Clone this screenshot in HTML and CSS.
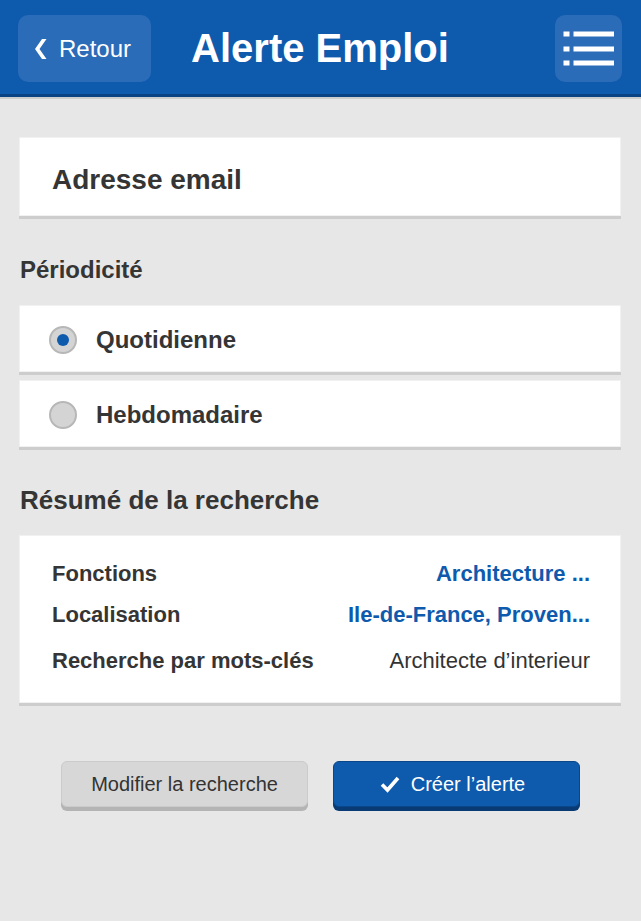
FILE: index.html
```html
<!DOCTYPE html>
<html lang="fr">
<head>
<meta charset="utf-8">
<title>Alerte Emploi</title>
<link rel="stylesheet" href="styles.css">
</head>
<body>
<header class="topbar">
  <div class="topbar-left">
    <button class="hbtn back-btn" type="button">
      <svg class="chev" width="13" height="20" viewBox="0 0 13 20"><polygon points="8,0 12.5,0 5.5,10 12.5,20 8,20 1,10" fill="#fff"/></svg>
      <span>Retour</span>
    </button>
  </div>
  <h1 class="title">Alerte Emploi</h1>
  <div class="topbar-right">
    <button class="hbtn menu-btn" type="button" aria-label="Menu">
      <svg width="67" height="67" viewBox="0 0 67 67">
        <rect x="8.5" y="16.5" width="6" height="5" fill="#fff"/>
        <rect x="18.5" y="16.5" width="40.5" height="5" fill="#fff"/>
        <rect x="8.5" y="31.5" width="6" height="5" fill="#fff"/>
        <rect x="18.5" y="31.5" width="40.5" height="5" fill="#fff"/>
        <rect x="8.5" y="45.5" width="6" height="5" fill="#fff"/>
        <rect x="18.5" y="45.5" width="40.5" height="5" fill="#fff"/>
      </svg>
    </button>
  </div>
</header>

<main class="content">
  <div class="card email-card">Adresse email</div>

  <h2 class="section-title periodicite">Périodicité</h2>
  <div class="card radio-card">
    <span class="radio checked"></span>
    <span class="radio-label">Quotidienne</span>
  </div>
  <div class="card radio-card">
    <span class="radio"></span>
    <span class="radio-label">Hebdomadaire</span>
  </div>

  <h2 class="section-title resume">Résumé de la recherche</h2>
  <div class="card summary-card">
    <div class="row">
      <span class="key">Fonctions</span>
      <span class="val link">Architecture ...</span>
    </div>
    <div class="row">
      <span class="key">Localisation</span>
      <span class="val link">Ile-de-France, Proven...</span>
    </div>
    <div class="row row-last">
      <span class="key">Recherche par mots-clés</span>
      <span class="val plain">Architecte d’interieur</span>
    </div>
  </div>

  <div class="actions">
    <button class="btn btn-grey" type="button">Modifier la recherche</button>
    <button class="btn btn-blue" type="button">
      <svg width="20" height="18" viewBox="0 0 20 18"><polyline points="2,9.5 7.5,15 18,3" fill="none" stroke="#fff" stroke-width="3.6" stroke-linejoin="miter" stroke-linecap="butt"/></svg>
      <span>Créer l’alerte</span>
    </button>
  </div>
</main>
</body>
</html>
```

FILE: styles.css
```css
* { box-sizing: border-box; }

html, body {
  margin: 0;
  padding: 0;
}

body {
  background: #e7e7e7;
  font-family: "Liberation Sans", Arial, sans-serif;
  color: #353535;
  min-height: 921px;
}

.topbar {
  display: grid;
  grid-template-columns: 1fr auto 1fr;
  align-items: center;
  height: 97px;
  padding: 15px 19px 12px 18px;
  background: #0e5aad;
  border-bottom: 3px solid #0a4384;
  box-shadow: 0 2px 0 #cdcdcd;
}

.topbar-left { display: flex; justify-content: flex-start; }
.topbar-right { display: flex; justify-content: flex-end; }

.hbtn {
  border: none;
  margin: 0;
  padding: 0;
  height: 67px;
  border-radius: 10px;
  background: #2a6cb8;
  color: #fff;
  font-family: "Liberation Sans", Arial, sans-serif;
  cursor: pointer;
}

.back-btn {
  width: 133px;
  display: flex;
  align-items: center;
  padding-left: 16px;
  gap: 12px;
  font-size: 24px;
}

.back-btn .chev { display: block; margin-top: 1px; }

.menu-btn {
  width: 67px;
  display: block;
}

.menu-btn svg { display: block; }

.title {
  margin: 0;
  color: #fff;
  font-size: 40px;
  font-weight: bold;
  line-height: 1;
  padding-bottom: 2px;
  white-space: nowrap;
}

.content {
  padding: 40px 20px 0 19px;
}

.card {
  background: #fff;
  border: 1px solid #f1f1f1;
  box-shadow: 0 3px 0 #cdcdcd;
}

.email-card {
  font-size: 28px;
  font-weight: bold;
  line-height: 32px;
  padding: 26px 32px 19px;
  height: 79px;
}

.section-title {
  margin: 0;
  font-size: 24px;
  font-weight: bold;
  line-height: 30px;
  padding-left: 1px;
}

.periodicite { margin-top: 39px; margin-bottom: 20px; font-size: 24px; }
.resume { margin-top: 38px; margin-bottom: 20px; font-size: 26px; }

.radio-card {
  display: flex;
  align-items: center;
  height: 67px;
  padding: 3px 0 0 29px;
  gap: 19px;
  margin-bottom: 8px;
}

.radio {
  width: 28px;
  height: 28px;
  border-radius: 50%;
  background: #d4d4d4;
  border: 2px solid #b7b7b7;
  display: flex;
  align-items: center;
  justify-content: center;
  flex: none;
}

.radio.checked::after {
  content: "";
  width: 12px;
  height: 12px;
  border-radius: 50%;
  background: #0e5aad;
}

.radio-label {
  font-size: 24px;
  font-weight: bold;
  line-height: 30px;
}

.summary-card {
  padding: 23px 30px 26px 32px;
}

.row {
  display: flex;
  justify-content: space-between;
  align-items: center;
  line-height: 30px;
  font-size: 22px;
  margin-bottom: 11px;
}

.row-last { margin-top: 16px; margin-bottom: 0; }

.key { font-weight: bold; }
.val.link { color: #0e5aad; font-weight: bold; }
.val.plain { color: #333; }

.actions {
  display: flex;
  justify-content: center;
  gap: 25px;
  margin-top: 58px;
  padding-left: 1px;
}

.btn {
  width: 247px;
  height: 46px;
  border-radius: 6px;
  font-family: "Liberation Sans", Arial, sans-serif;
  font-size: 20px;
  display: flex;
  align-items: center;
  justify-content: center;
  gap: 11px;
  padding: 0;
  margin: 0;
  cursor: pointer;
}

.btn-grey {
  background: #d7d7d7;
  border: 1px solid #cbcbcb;
  box-shadow: 0 4px 0 #b4b4b4;
  color: #333;
}

.btn-blue {
  background: #0e5aad;
  border: 1px solid #0a468a;
  box-shadow: 0 4px 0 #0a3a73;
  color: #fff;
  padding-right: 8px;
}

.btn-blue svg { display: block; }
```
